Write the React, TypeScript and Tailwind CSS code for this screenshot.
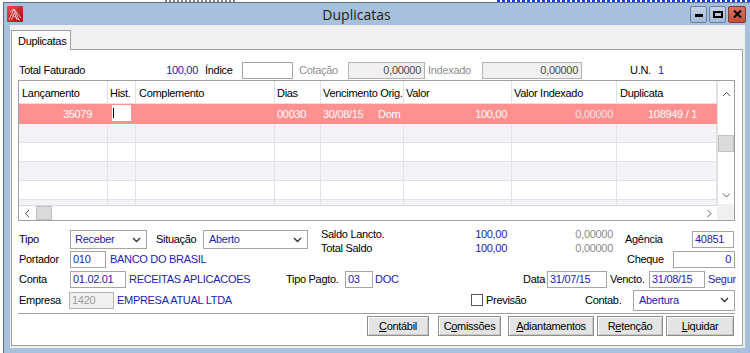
import React from "react";

type ChevDir = "up" | "down" | "left" | "right";

function Chev({ dir }: { dir: ChevDir }) {
  const paths: Record<ChevDir, string> = {
    up: "M1 5 L4.5 1.5 L8 5",
    down: "M1 1.5 L4.5 5 L8 1.5",
    left: "M5 1 L1.5 4.5 L5 8",
    right: "M1.5 1 L5 4.5 L1.5 8",
  };
  const horiz = dir === "up" || dir === "down";
  return (
    <svg width={horiz ? 9 : 7} height={horiz ? 7 : 9} viewBox={horiz ? "0 0 9 7" : "0 0 7 9"}>
      <path d={paths[dir]} fill="none" stroke="#5a5a5a" strokeWidth="1" />
    </svg>
  );
}

function SelChev() {
  return (
    <svg width="9" height="6" viewBox="0 0 9 6">
      <path d="M1 1 L4.5 4.5 L8 1" fill="none" stroke="#333" strokeWidth="1.4" />
    </svg>
  );
}

function Field({
  w,
  children,
  right = false,
  disabled = false,
  h = "h-[17px]",
  color = "text-[#2323b0]",
}: {
  w: string;
  children?: React.ReactNode;
  right?: boolean;
  disabled?: boolean;
  h?: string;
  color?: string;
}) {
  return (
    <div
      className={`${w} ${h} shrink-0 border flex items-center whitespace-nowrap overflow-hidden leading-[13px] ${
        disabled ? "bg-[#f0f0f0] border-[#b4b4b4]" : "bg-white border-[#a5a5a5]"
      } ${right ? "justify-end pr-[3px]" : "pl-[2px]"} ${color}`}
    >
      {children}
    </div>
  );
}

function Select({ w, value, h = "h-[19px]", pl = "pl-[4px]" }: { w: string; value: string; h?: string; pl?: string }) {
  return (
    <div
      className={`${w} ${h} ${pl} shrink-0 border border-[#a5a5a5] bg-white flex items-center justify-between pr-[5px] text-[#2323b0] leading-[13px]`}
    >
      <span>{value}</span>
      <SelChev />
    </div>
  );
}

function Btn({ w, ml, children }: { w: string; ml: string; children: React.ReactNode }) {
  return (
    <div
      className={`${w} ${ml} h-[20px] shrink-0 border border-[#8e8e8e] bg-[#e4e4e4] shadow-[inset_1px_1px_0_#ffffff,inset_-1px_-1px_0_#c8c8c8] flex items-center justify-center leading-[13px]`}
    >
      {children}
    </div>
  );
}

const cols = [
  { w: "w-[89px]", h: "Lançamento", pl: "pl-[3px]" },
  { w: "w-[28px]", h: "Hist.", pl: "pl-[2px]" },
  { w: "w-[139px]", h: "Complemento", pl: "pl-[3px]" },
  { w: "w-[46px]", h: "Dias", pl: "pl-[2px]" },
  { w: "w-[83px]", h: "Vencimento Orig.", pl: "pl-[2px]" },
  { w: "w-[108px]", h: "Valor", pl: "pl-[2px]" },
  { w: "w-[105px]", h: "Valor Indexado", pl: "pl-[2px]" },
  { w: "w-[100px]", h: "Duplicata", pl: "pl-[3px]" },
];

function EmptyRow({ gray, h = "h-[19px]" }: { gray: boolean; h?: string }) {
  return (
    <div className={`${h} shrink-0 flex border-b border-[#e2e2e2] ${gray ? "bg-[#f2f2f7]" : "bg-white"}`}>
      {cols.map((c, i) => (
        <div key={i} className={`${c.w} h-full shrink-0 border-r border-[#e2e2e2]`} />
      ))}
    </div>
  );
}

export default function App() {
  return (
    <div className="w-[750px] h-[353px] overflow-hidden bg-white flex flex-col font-['Liberation_Sans',Arial,sans-serif] text-[11px] tracking-[-0.3px] text-black">
      {/* desktop strip behind window */}
      <div className="h-[2px] shrink-0 flex">
        <div className="ml-[165px] w-[70px] h-[2px] bg-[repeating-linear-gradient(90deg,#888_0_2px,transparent_2px_4px)]" />
        <div className="ml-[262px] w-[253px] h-[2px] bg-[repeating-linear-gradient(90deg,#1a3fd8_0_3px,transparent_3px_5px)]" />
      </div>
      <div className="flex flex-1 min-h-0">
        <div className="w-[3px] shrink-0 bg-white" />
        {/* window */}
        <div className="flex-1 flex flex-col bg-[#a7c0dc] border-l border-t border-[#5d708c]">
          {/* title bar */}
          <div className="h-[22px] shrink-0 flex items-center">
            <div className="ml-[3px] w-[16px] h-[16px] shrink-0">
              <svg width="16" height="16" viewBox="0 0 16 16">
                <defs>
                  <linearGradient id="rg" x1="0" y1="0" x2="1" y2="1">
                    <stop offset="0" stopColor="#f04a4e" />
                    <stop offset="1" stopColor="#a80c12" />
                  </linearGradient>
                </defs>
                <rect x="0" y="0" width="16" height="16" rx="1" fill="url(#rg)" />
                <path
                  d="M2 14 L7 3 L12 14 M4.5 14 L7.5 6.5 L10 14 M7 3 L14 12 M5.5 9 L13 14.5 M3 6 L7 3"
                  stroke="#ffffff"
                  strokeOpacity="0.8"
                  strokeWidth="0.8"
                  fill="none"
                />
              </svg>
            </div>
            <div className="flex-1 text-center font-['Open_Sans','Noto_Sans',sans-serif] text-[14px] tracking-normal text-[#1b1b1b] leading-[18px] pt-[1px]">
              Duplicatas
            </div>
            <div className="flex gap-[2px] mr-[4px]">
              <div className="w-[17px] h-[17px] border border-[#6a7f9f] rounded-[2px] bg-[linear-gradient(#c3d4e9,#a4bad6)] flex items-end justify-center pb-[5px]">
                <div className="w-[8px] h-[3px] bg-black" />
              </div>
              <div className="w-[17px] h-[17px] border border-[#6a7f9f] rounded-[2px] bg-[linear-gradient(#c3d4e9,#a4bad6)] flex items-center justify-center">
                <div className="w-[10px] h-[7px] border-2 border-black" />
              </div>
              <div className="w-[18px] h-[17px] border border-[#7e3b33] rounded-[2px] bg-[linear-gradient(#d9715f,#c24f40)] flex items-center justify-center">
                <svg width="9" height="8" viewBox="0 0 9 8">
                  <path d="M1 0.5 L8 7.5 M8 0.5 L1 7.5" stroke="#000" strokeWidth="2" />
                </svg>
              </div>
            </div>
          </div>

          {/* body */}
          <div className="flex-1 min-h-0 pl-[6px] pr-[5px] pb-[5px] flex">
            <div className="flex-1 bg-[#f0f0f0] flex flex-col">
              {/* tab strip */}
              <div className="h-[24px] shrink-0 flex items-end pl-[1px]">
                <div className="w-[60px] h-[20px] mb-[-1px] bg-white border border-b-0 border-[#a0a0a0] relative z-10 pl-[6px] pt-[4px] leading-[13px]">
                  Duplicatas
                </div>
              </div>
              {/* panel */}
              <div className="flex-1 ml-[1px] mr-[2px] mb-[2px] border border-[#a0a0a0] bg-white flex flex-col">
                {/* Total Faturado row */}
                <div className="mt-[11px] h-[18px] shrink-0 flex items-center pl-[7px] leading-[13px]">
                  <span className="w-[120px] shrink-0">Total Faturado</span>
                  <span className="w-[59px] shrink-0 text-right text-[#2323b0]">100,00</span>
                  <span className="ml-[7px] w-[37px] shrink-0">Índice</span>
                  <Field w="w-[51px]" />
                  <span className="ml-[6px] w-[49px] shrink-0 text-[#8d8d8d]">Cotação</span>
                  <Field w="w-[77px]" right disabled color="text-[#4a4a4a]">
                    0,00000
                  </Field>
                  <span className="ml-[3px] w-[54px] shrink-0 text-[#8d8d8d]">Indexado</span>
                  <Field w="w-[100px]" right disabled color="text-[#4a4a4a]">
                    0,00000
                  </Field>
                  <span className="ml-[48px] w-[28px] shrink-0">U.N.</span>
                  <span className="text-[#2323b0]">1</span>
                </div>

                {/* grid */}
                <div className="mt-[1px] ml-[6px] w-[717px] h-[141px] shrink-0 border border-[#a0a0a0] flex">
                  <div className="w-[698px] shrink-0 flex flex-col">
                    <div className="h-[23px] shrink-0 flex border-b border-[#e2e2e2] bg-white">
                      {cols.map((c, i) => (
                        <div
                          key={i}
                          className={`${c.w} ${c.pl} h-full shrink-0 border-r border-[#e2e2e2] flex items-center pt-[3px] whitespace-nowrap overflow-hidden leading-[13px]`}
                        >
                          {c.h}
                        </div>
                      ))}
                    </div>
                    <div className="flex-1 min-h-0 overflow-hidden flex flex-col">
                      {/* selected pink row */}
                      <div className="h-[20px] shrink-0 flex bg-[#ff9090] text-white leading-[13px]">
                        <div className="w-[89px] shrink-0 flex items-center justify-end pr-[16px]">35079</div>
                        <div className="w-[28px] shrink-0 pl-[4px] pt-[1px]">
                          <div className="w-[19px] h-[16px] bg-white flex items-center pl-[1px]">
                            <div className="w-[1px] h-[10px] bg-black" />
                          </div>
                        </div>
                        <div className="w-[139px] shrink-0" />
                        <div className="w-[46px] shrink-0 flex items-center pl-[2px]">00030</div>
                        <div className="w-[83px] shrink-0 flex items-center pl-[2px]">
                          <span className="w-[55px] shrink-0">30/08/15</span>
                          <span>Dom</span>
                        </div>
                        <div className="w-[108px] shrink-0 flex items-center justify-end pr-[5px]">100,00</div>
                        <div className="w-[105px] shrink-0 flex items-center justify-end pr-[4px] text-[#ebe3e3]">0,00000</div>
                        <div className="w-[100px] shrink-0 flex items-center justify-end pr-[20px]">108949 / 1</div>
                      </div>
                      <EmptyRow gray />
                      <EmptyRow gray={false} />
                      <EmptyRow gray />
                      <EmptyRow gray={false} />
                      <EmptyRow gray />
                    </div>
                    {/* horizontal scrollbar */}
                    <div className="h-[15px] shrink-0 border-t border-[#d8d8d8] bg-white flex">
                      <div className="w-[17px] h-full flex items-center justify-center shrink-0">
                        <Chev dir="left" />
                      </div>
                      <div className="w-[16px] h-full bg-[#dadada] border border-[#c2c2c2] shrink-0" />
                      <div className="flex-1" />
                      <div className="w-[16px] h-full flex items-center justify-center shrink-0">
                        <Chev dir="right" />
                      </div>
                    </div>
                  </div>
                  {/* vertical scrollbar */}
                  <div className="w-[17px] shrink-0 flex flex-col">
                    <div className="h-[123px] shrink-0 bg-white border-l border-[#e0e0e0] flex flex-col items-center">
                      <div className="h-[21px] shrink-0 flex items-end pb-[4px]">
                        <Chev dir="up" />
                      </div>
                      <div className="mt-[33px] w-[16px] h-[17px] shrink-0 bg-[#dadada] border border-[#c2c2c2]" />
                      <div className="flex-1" />
                      <div className="h-[17px] shrink-0 flex items-center">
                        <Chev dir="down" />
                      </div>
                    </div>
                    <div className="flex-1 bg-[#f0f0f0]" />
                  </div>
                </div>

                {/* form row 1 */}
                <div className="mt-[8px] h-[21px] shrink-0 flex items-center pl-[7px] leading-[13px]">
                  <span className="w-[51px] shrink-0">Tipo</span>
                  <Select w="w-[77px]" value="Receber" />
                  <span className="ml-[9px] w-[47px] shrink-0">Situação</span>
                  <Select w="w-[105px]" value="Aberto" pl="pl-[5px]" />
                  <div className="ml-[13px] self-start mt-[-2px] w-[292px] shrink-0 flex flex-col leading-[14px]">
                    <div className="flex">
                      <span className="w-[120px] shrink-0">Saldo Lancto.</span>
                      <span className="w-[66px] shrink-0 text-right text-[#2323b0]">100,00</span>
                      <span className="w-[106px] shrink-0 text-right text-[#8a8a8a]">0,00000</span>
                    </div>
                    <div className="flex">
                      <span className="w-[120px] shrink-0">Total Saldo</span>
                      <span className="w-[66px] shrink-0 text-right text-[#2323b0]">100,00</span>
                      <span className="w-[106px] shrink-0 text-right text-[#8a8a8a]">0,00000</span>
                    </div>
                  </div>
                  <span className="ml-[12px] w-[67px] shrink-0">Agência</span>
                  <Field w="w-[42px]">40851</Field>
                </div>

                {/* form row 2 */}
                <div className="h-[19px] shrink-0 flex items-center pl-[7px] leading-[13px]">
                  <span className="w-[51px] shrink-0">Portador</span>
                  <Field w="w-[36px]">010</Field>
                  <span className="ml-[4px] w-[517px] shrink-0 text-[#2323b0]">BANCO DO BRASIL</span>
                  <span className="w-[46px] shrink-0">Cheque</span>
                  <Field w="w-[62px]" right color="text-[#2323b0]">
                    0
                  </Field>
                </div>

                {/* form row 3 */}
                <div className="h-[20px] shrink-0 flex items-center pl-[7px] leading-[13px]">
                  <span className="w-[51px] shrink-0">Conta</span>
                  <Field w="w-[56px]">01.02.01</Field>
                  <span className="ml-[3px] w-[157px] shrink-0 text-[#2323b0]">RECEITAS APLICACOES</span>
                  <span className="w-[59px] shrink-0">Tipo Pagto.</span>
                  <Field w="w-[28px]">03</Field>
                  <span className="ml-[2px] w-[148px] shrink-0 text-[#2323b0]">DOC</span>
                  <span className="w-[24px] shrink-0">Data</span>
                  <Field w="w-[60px]">31/07/15</Field>
                  <span className="ml-[3px] w-[39px] shrink-0">Vencto.</span>
                  <Field w="w-[56px]">31/08/15</Field>
                  <span className="ml-[3px] shrink-0 whitespace-nowrap text-[#2323b0]">Segur</span>
                </div>

                {/* form row 4 */}
                <div className="h-[22px] shrink-0 flex items-center pl-[7px] leading-[13px]">
                  <span className="w-[50px] shrink-0">Empresa</span>
                  <Field w="w-[45px]" disabled color="text-[#9a9a9a]">
                    1420
                  </Field>
                  <span className="ml-[3px] w-[354px] shrink-0 text-[#2323b0]">EMPRESA ATUAL LTDA</span>
                  <div className="w-[12px] h-[12px] shrink-0 border border-[#555] bg-white" />
                  <span className="ml-[3px] w-[99px] shrink-0">Previsão</span>
                  <span className="w-[48px] shrink-0">Contab.</span>
                  <Select w="w-[102px]" value="Abertura" h="h-[21px]" pl="pl-[5px]" />
                </div>

                {/* separator */}
                <div className="mt-[2px] ml-[6px] w-[717px] h-[2px] shrink-0 border-t border-[#a0a0a0] border-b border-b-white" />

                {/* buttons */}
                <div className="mt-[1px] h-[20px] shrink-0 flex pl-[355px]">
                  <Btn w="w-[62px]" ml="ml-0">
                    <span>
                      <u>C</u>ontábil
                    </span>
                  </Btn>
                  <Btn w="w-[63px]" ml="ml-[9px]">
                    <span>
                      C<u>o</u>missões
                    </span>
                  </Btn>
                  <Btn w="w-[86px]" ml="ml-[7px]">
                    <span>
                      <u>A</u>diantamentos
                    </span>
                  </Btn>
                  <Btn w="w-[66px]" ml="ml-[3px]">
                    <span>
                      R<u>e</u>tenção
                    </span>
                  </Btn>
                  <Btn w="w-[68px]" ml="ml-[3px]">
                    <span>
                      <u>L</u>iquidar
                    </span>
                  </Btn>
                </div>
              </div>
            </div>
          </div>
        </div>
      </div>
    </div>
  );
}
